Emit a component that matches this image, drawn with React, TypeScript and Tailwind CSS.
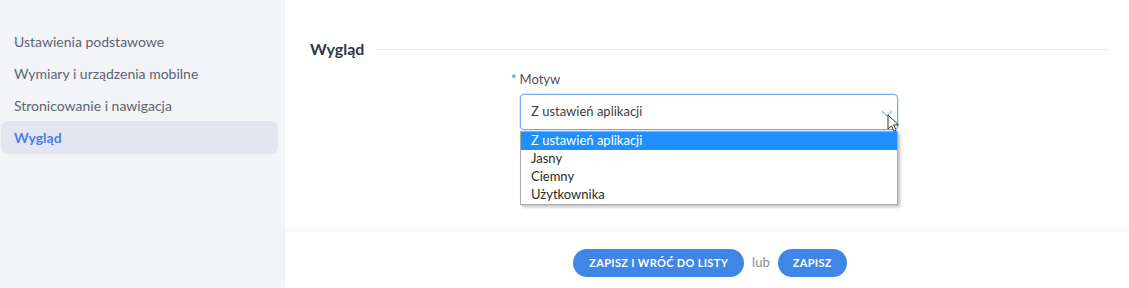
import React from "react";

const font = { fontFamily: "Lato, 'Noto Sans', sans-serif" };

export default function App() {
  const items = [
    "Ustawienia podstawowe",
    "Wymiary i urządzenia mobilne",
    "Stronicowanie i nawigacja",
  ];
  return (
    <div className="flex h-[288px] w-full bg-white overflow-hidden" style={font}>
      <aside className="w-[285px] shrink-0 bg-[#f3f4f8] pt-[25px] pl-[1px] pr-[7px]">
        {items.map((t) => (
          <div key={t} className="flex h-8 items-center pl-[13px] text-[14px] text-[#5e6370]">
            {t}
          </div>
        ))}
        <div className="flex h-[33px] items-center rounded-[7px] bg-[#e3e6f0] pl-[13px] text-[14px] font-bold text-[#4b7fe6]">
          Wygląd
        </div>
      </aside>
      <main className="flex flex-1 flex-col">
        <div className="relative h-[232px] pl-[25px] pr-[21px] pt-[37px]">
          <div className="flex items-center gap-3">
            <h2 className="text-[16px] font-bold text-[#2f3848]">Wygląd</h2>
            <div className="h-px flex-1 bg-[#ececef]" />
          </div>
          <div className="ml-[210px] mt-[9px] w-[378px]">
            <div className="relative -ml-[9px] flex items-center gap-[3px] text-[13px] text-[#4a4f5a]">
              <span className="text-[#3e7fe5]">*</span>
              <span>Motyw</span>
            </div>
            <div className="relative mt-[4px]">
              <div className="flex h-[36px] items-center rounded-[4px] border border-[#79a8f2] bg-white pl-[10px] text-[13px] text-[#3a3f48] shadow-[0_0_0_1px_rgba(121,168,242,0.25)]">
                Z ustawień aplikacji
              </div>
              <svg className="absolute right-[5px] top-[16px]" width="12" height="7" viewBox="0 0 12 7" fill="none">
                <path d="M1 1l5 5 5-5" stroke="#8fb5f0" strokeWidth="1.2" />
              </svg>
              <svg className="absolute right-[-2px] top-[20px] z-10" width="13" height="19" viewBox="0 0 13 19">
                <path d="M1 1v14l3.5-3.2 2.4 5.4 2.3-1-2.4-5.3h4.7z" fill="#fff" stroke="#333" strokeWidth="1" strokeLinejoin="round" />
              </svg>
              <div className="absolute left-0 top-[37px] w-[378px] border border-[#a9a9a9] bg-white text-[13px] text-[#2a2a2a] shadow-[2px_2px_3px_rgba(0,0,0,0.25)]">
                <div className="flex h-[18px] items-center bg-[#1e90ff] pl-[10px] text-white">Z ustawień aplikacji</div>
                <div className="flex h-[18px] items-center pl-[10px]">Jasny</div>
                <div className="flex h-[18px] items-center pl-[10px]">Ciemny</div>
                <div className="flex h-[18px] items-center pl-[10px]">Użytkownika</div>
              </div>
            </div>
          </div>
        </div>
        <div className="flex flex-1 items-center justify-center gap-2 bg-white pl-[6px] pt-[6px] shadow-[0_-3px_4px_rgba(0,0,0,0.035)]">
          <button className="h-[28px] rounded-full bg-[#3f86e8] px-[16px] text-[11px] font-bold tracking-[0.03em] text-white">
            ZAPISZ I WRÓĆ DO LISTY
          </button>
          <span className="text-[13px] text-[#8a8d96]">lub</span>
          <button className="h-[28px] rounded-full bg-[#3f86e8] px-[15px] text-[11px] font-bold tracking-[0.03em] text-white">
            ZAPISZ
          </button>
        </div>
      </main>
    </div>
  );
}
